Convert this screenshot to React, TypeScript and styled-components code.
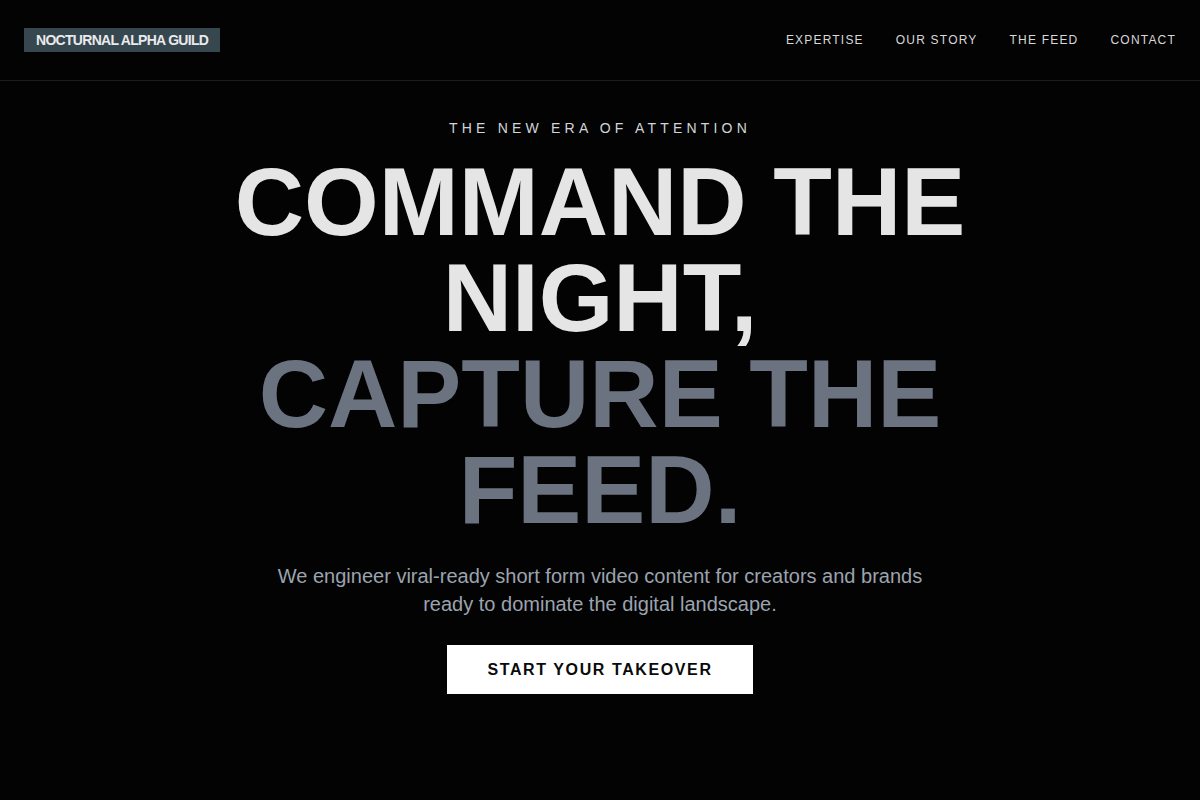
import styled, { createGlobalStyle } from "styled-components";

const GlobalStyle = createGlobalStyle`
  * {
    box-sizing: border-box;
  }
  html,
  body {
    margin: 0;
    padding: 0;
    background-color: #030303;
    font-family: "Liberation Sans", Arial, sans-serif;
  }
`;

const Page = styled.div`
  min-height: 800px;
  background-color: #030303;
  color: #e5e5e5;
`;

const Header = styled.header`
  display: flex;
  align-items: center;
  justify-content: space-between;
  height: 81px;
  padding: 0 24px;
  border-bottom: 1px solid #1c1c1c;
`;

const Logo = styled.div`
  display: inline-block;
  padding: 0 12px;
  height: 24px;
  line-height: 24px;
  background-color: #37474f;
  color: #e8eaec;
  font-size: 14px;
  font-weight: 700;
  letter-spacing: -0.05em;
  white-space: nowrap;
`;

const Nav = styled.nav`
  display: flex;
  align-items: center;
  gap: 32px;
`;

const NavLink = styled.a`
  color: #d8d8d8;
  font-size: 12px;
  letter-spacing: 0.1em;
  text-decoration: none;
  text-transform: uppercase;
  cursor: pointer;
`;

const Hero = styled.section`
  display: flex;
  flex-direction: column;
  align-items: center;
  padding-top: 37px;
  text-align: center;
`;

const Eyebrow = styled.p`
  margin: 0 0 16px;
  font-size: 14px;
  line-height: 20px;
  letter-spacing: 0.3em;
  color: #d1d5db;
  text-transform: uppercase;
`;

const Headline = styled.h1`
  margin: 0;
  max-width: 800px;
  font-size: 96px;
  line-height: 1;
  font-weight: 700;
  color: #e5e5e5;
`;

const Muted = styled.span`
  display: block;
  color: #6b7280;
`;

const Lead = styled.p`
  margin: 24px 0 0;
  max-width: 672px;
  font-size: 20px;
  line-height: 28px;
  color: #9ca3af;
`;

const CallButton = styled.button`
  margin-top: 27px;
  padding: 14px 40px;
  border: none;
  background-color: #ffffff;
  color: #0a0a0a;
  font-family: inherit;
  font-size: 16px;
  line-height: 21px;
  font-weight: 700;
  letter-spacing: 0.1em;
  text-transform: uppercase;
  cursor: pointer;
`;

const links = ["Expertise", "Our Story", "The Feed", "Contact"];

const App = () => {
  return (
    <Page>
      <GlobalStyle />
      <Header>
        <Logo>NOCTURNAL ALPHA GUILD</Logo>
        <Nav>
          {links.map((link) => (
            <NavLink key={link}>{link}</NavLink>
          ))}
        </Nav>
      </Header>
      <Hero>
        <Eyebrow>The new era of attention</Eyebrow>
        <Headline>
          COMMAND THE NIGHT,
          <Muted>CAPTURE THE FEED.</Muted>
        </Headline>
        <Lead>
          We engineer viral-ready short form video content for creators and
          brands ready to dominate the digital landscape.
        </Lead>
        <CallButton>Start Your Takeover</CallButton>
      </Hero>
    </Page>
  );
};

export default App;
